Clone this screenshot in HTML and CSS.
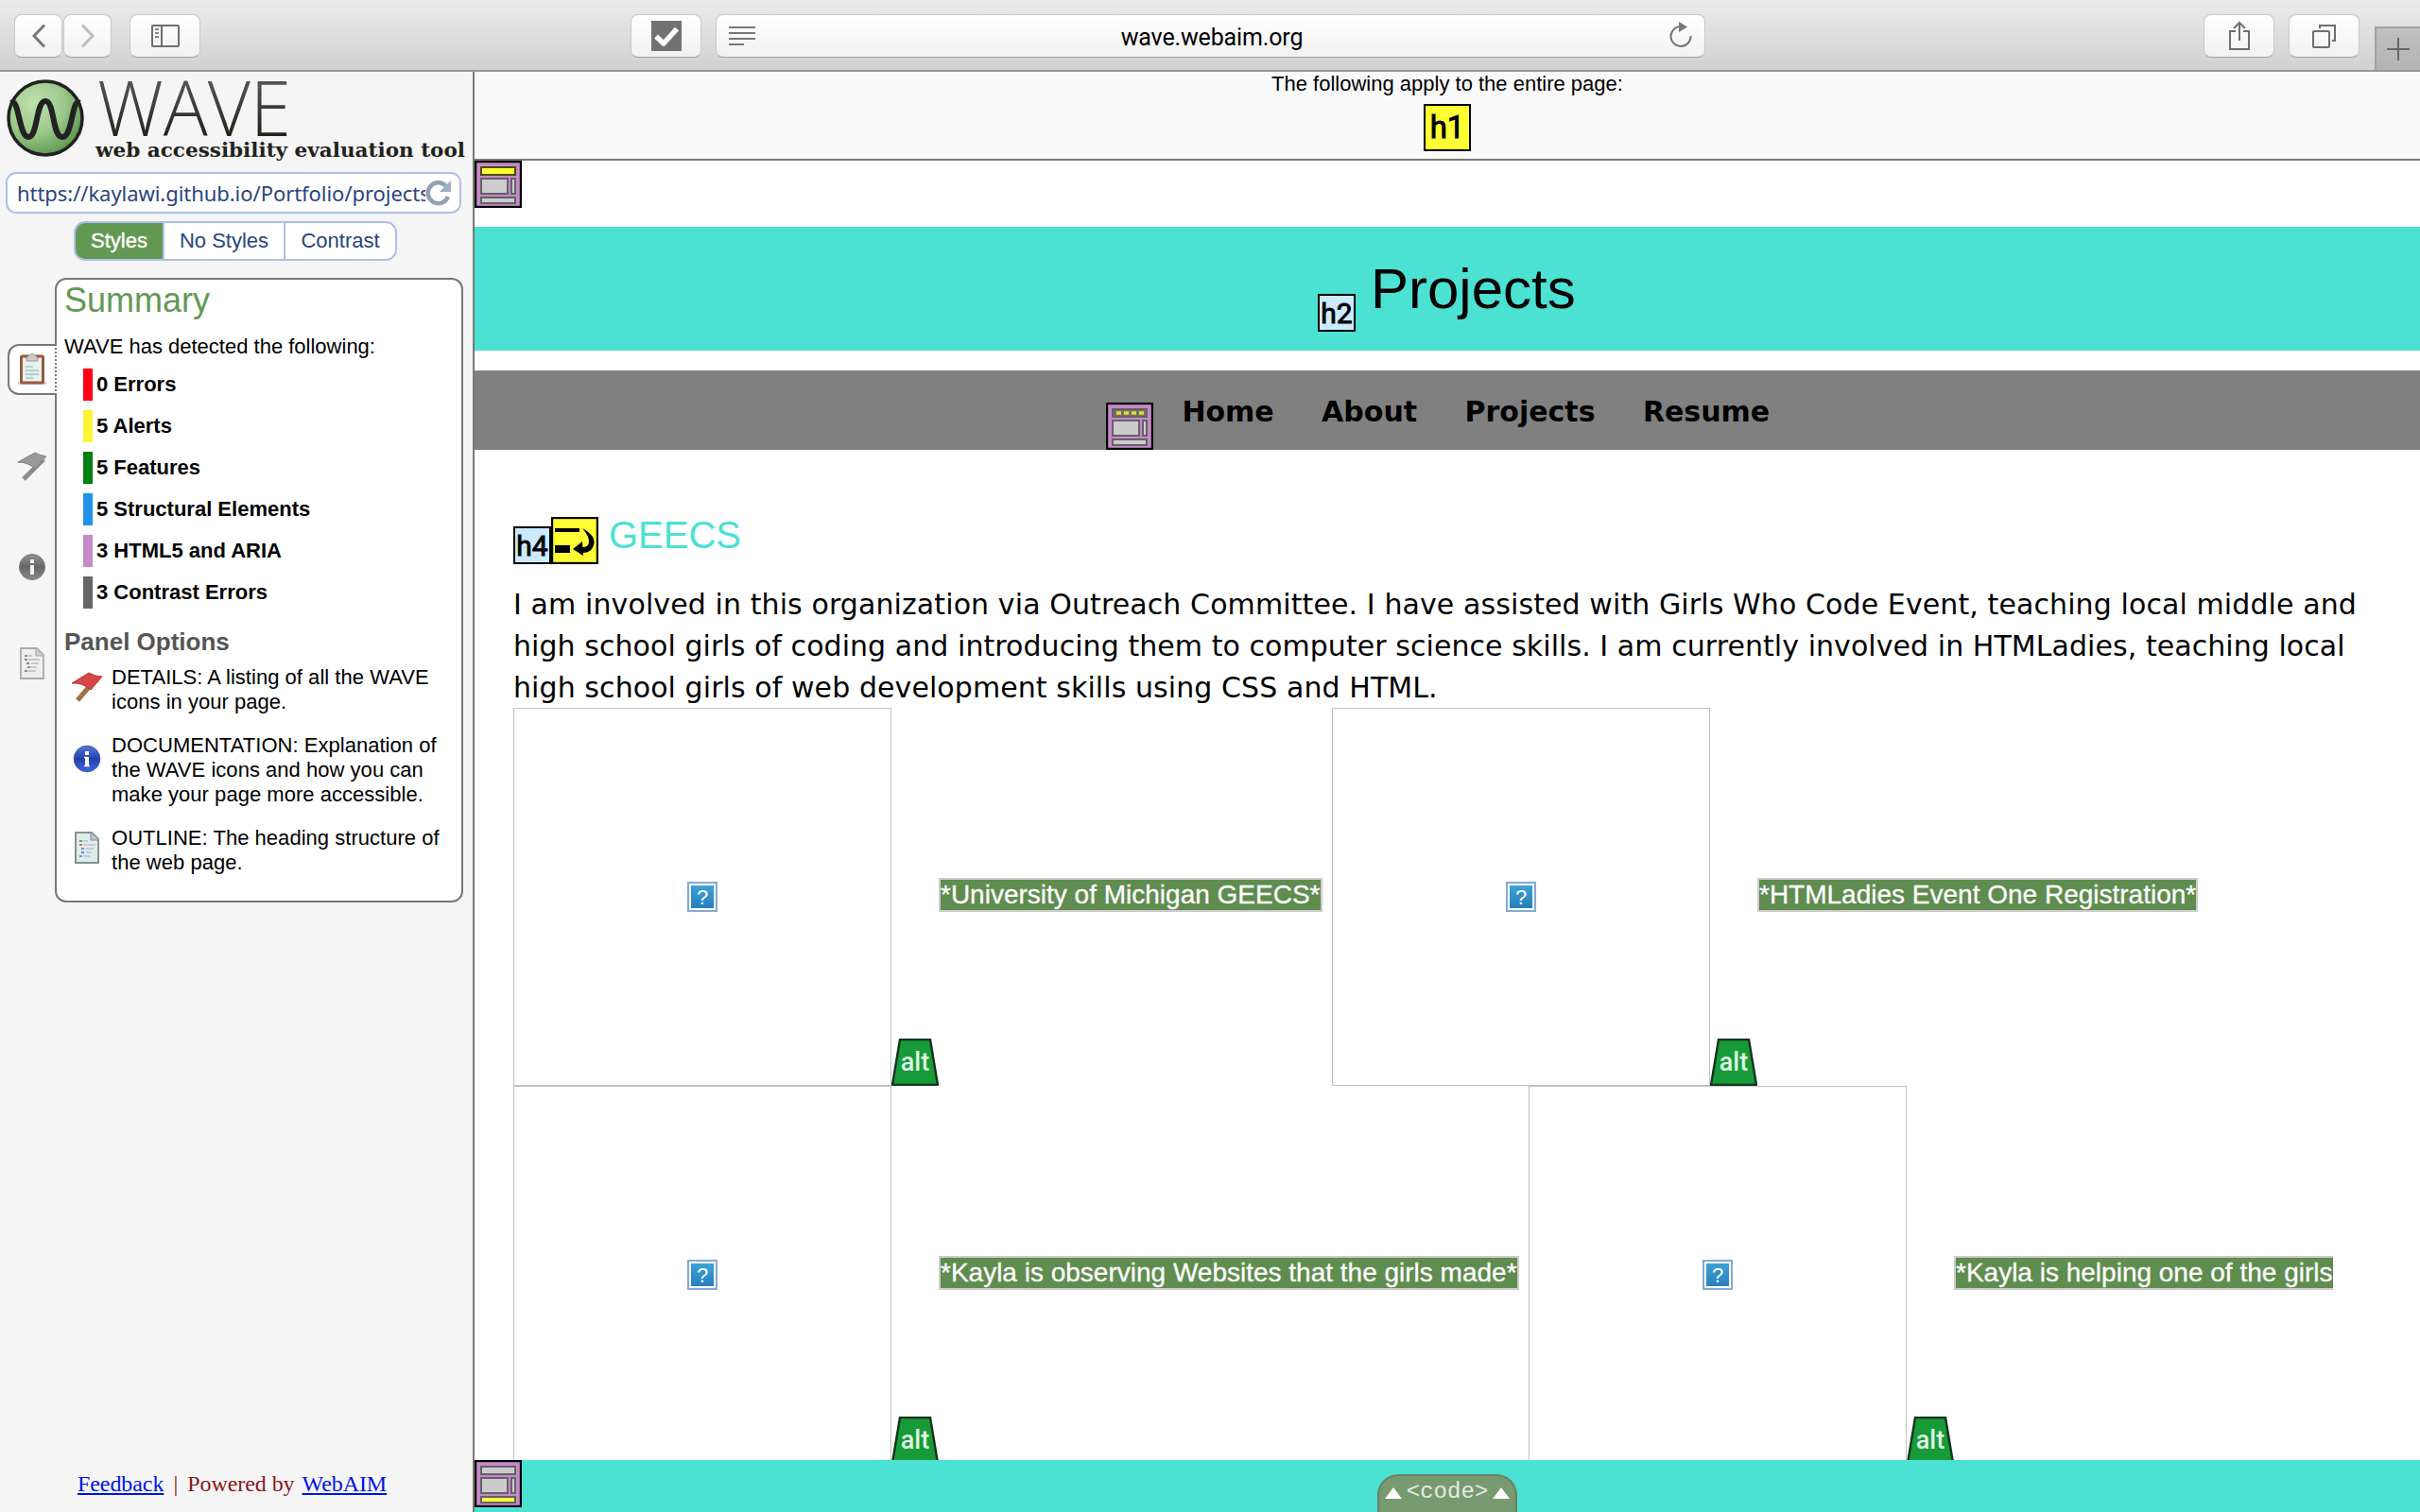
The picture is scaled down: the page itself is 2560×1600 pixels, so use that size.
FILE: index.html
```html
<!DOCTYPE html>
<html lang="en">
<head>
<meta charset="utf-8">
<title>WAVE Report</title>
<link rel="stylesheet" href="styles.css">
</head>
<body>
<svg class="defs" width="0" height="0" aria-hidden="true">
  <defs>
    <linearGradient id="ink" x1="0" y1="0" x2="0" y2="1"><stop offset="0.25" stop-color="#555"/><stop offset="0.8" stop-color="#22221a"/></linearGradient>
    <radialGradient id="orb" cx="0.35" cy="0.3" r="0.75"><stop offset="0" stop-color="#bfe0ae"/><stop offset="0.55" stop-color="#9cc88a"/><stop offset="1" stop-color="#5b964b"/></radialGradient>
    <linearGradient id="blue" x1="0" y1="0" x2="0" y2="1"><stop offset="0" stop-color="#5a78d8"/><stop offset="0.5" stop-color="#2440ae"/><stop offset="1" stop-color="#3f66dc"/></linearGradient>
    <linearGradient id="grey" x1="0" y1="0" x2="0" y2="1"><stop offset="0" stop-color="#949494"/><stop offset="0.5" stop-color="#666"/><stop offset="1" stop-color="#8b8b8b"/></linearGradient>
    <linearGradient id="sky" x1="0" y1="0" x2="0" y2="1"><stop offset="0" stop-color="#3aa3d6"/><stop offset="1" stop-color="#277fbe"/></linearGradient>
    <symbol id="alt" viewBox="0 0 50 50"><path d="M9 1H41L49 49H1Z" fill="#169b38" stroke="#15331c" stroke-width="2.4"/><text x="25" y="34" text-anchor="middle" class="alt-text">alt</text></symbol>
    <symbol id="missing" viewBox="0 0 32 32"><rect width="32" height="32" fill="#86a9d6"/><rect x="2" y="2" width="28" height="28" fill="#fff"/><rect x="4" y="4" width="24" height="24" fill="url(#sky)"/><text x="16" y="24" text-anchor="middle" class="missing-text">?</text></symbol>
    <symbol id="layout" viewBox="0 0 50 50"><rect x="1" y="1" width="48" height="48" fill="#c58ac8" stroke="#000" stroke-width="2.4"/><g fill="#ccc" stroke="#65606a" stroke-width="2"><rect x="7" y="19" width="28" height="16"/><rect x="39" y="19" width="4" height="16"/></g></symbol>
  </defs>
</svg>

<header class="toolbar">
  <div class="btn nav-btn"><svg width="50" height="46" fill="none" stroke="#777" stroke-width="3"><path d="M31 11.500L20 23L31 34.500"/></svg></div>
  <div class="btn nav-btn fwd"><svg width="50" height="46" fill="none" stroke="#bdbdbd" stroke-width="3"><path d="M19 11.500L30 23L19 34.500"/></svg></div>
  <div class="btn side-btn"><svg width="30" height="24" fill="none" stroke="#6e6e6e" stroke-width="2"><rect x="1" y="1" width="28" height="22" rx="1"/><path d="M11 1V23"/><path d="M4 5H8M4 9H8M4 13H8" stroke-width="1.800" stroke="#888"/></svg></div>
  <div class="btn check-btn"><svg width="32" height="32"><rect width="32" height="32" fill="#727272"/><path d="M5 16.500L13 24L27 8.500" fill="none" stroke="#fff" stroke-width="5.500" stroke-linejoin="round" stroke-linecap="butt"/></svg></div>
  <div class="btn address">
    <svg width="28" height="20" stroke="#777" stroke-width="2"><path d="M0 1H28M0 7H28M0 13H28M0 19H16"/></svg>
    <span class="host">wave.webaim.org</span>
    <svg class="reload" width="26" height="28" fill="none" stroke="#777" stroke-width="2"><path d="M14 5A10.500 10.500 0 1 0 23.500 15"/><path d="M11 0L20 5.500L11 11Z" fill="#777" stroke="none"/></svg>
  </div>
  <div class="btn share"><svg width="24" height="32" fill="none" stroke="#6e6e6e" stroke-width="2"><path d="M8 11H2V30H22V11H16M12 21V3M6 8L12 2L18 8"/></svg></div>
  <div class="btn tabs-btn"><svg width="26" height="26" fill="none" stroke="#6e6e6e" stroke-width="2"><rect x="1" y="8" width="17" height="17" rx="1"/><path d="M8 5V2H24V18H21"/></svg></div>
  <div class="plus"><svg width="24" height="24" stroke="#666" stroke-width="2"><path d="M0 12H24M12 0V24"/></svg></div>
</header>

<div class="main">
  <aside class="sidebar">
    <svg class="logo" width="500" height="106">
      <circle cx="48" cy="49" r="39" fill="url(#orb)" stroke="#222" stroke-width="3.500"/>
      <path d="M12 33C20 27 20 69 30 69S38 31 48 31S55 69 66 69S76 27 84 33" fill="none" stroke="#222" stroke-width="6"/>
      <text x="103" y="68" class="wave" textLength="205" lengthAdjust="spacingAndGlyphs" fill="url(#ink)">WAVE</text>
      <text x="101" y="90" class="slogan" textLength="391" lengthAdjust="spacingAndGlyphs">web accessibility evaluation tool</text>
    </svg>
    <div class="url"><span>https://kaylawi.github.io/Portfolio/projects.html</span>
      <svg width="28" height="28" fill="none"><path d="M21.500 6.500A11 11 0 1 0 24 18" stroke="#93a0b4" stroke-width="4.500"/><path d="M27 1V13H15Z" fill="#a0afbf"/></svg>
    </div>
    <div class="modes"><span class="on">Styles</span><span>No Styles</span><span>Contrast</span></div>
    <div class="lower">
      <nav class="side-tabs">
        <div class="side-tab active"><svg width="30" height="34"><path d="M0 30H30V33H0Z" fill="#777" opacity=".35"/><rect x="3.500" y="3" width="23" height="28" rx="1" fill="#e7f1ef" stroke="#99593a" stroke-width="3"/><path d="M9 5Q15 -4 21 5V8H9Z" fill="#ccc" stroke="#999"/><path d="M8 14H16M8 18H22M8 22H22M8 26H16" stroke="#b5cfcb" stroke-width="2"/></svg></div>
        <div class="side-tab t2"><svg width="32" height="32"><path d="M28 8L7 29" stroke="#8b8b8b" stroke-width="5"/><path d="M1 11L19 1Q24 4 31 5L19 18Q12 11 1 11Z" fill="#9a9a9a" stroke="#7d7d7d"/></svg></div>
        <div class="side-tab t3"><svg width="30" height="30"><circle cx="15" cy="15" r="13.500" fill="url(#grey)" stroke="#777"/><path d="M15 7V11M15 13V23" stroke="#f4f4f4" stroke-width="4"/></svg></div>
        <div class="side-tab t4"><svg width="26" height="34"><path d="M1 1H18L25 8V33H1Z" fill="#eee" stroke="#aaa" stroke-width="1.800"/><path d="M17 1V9H25" fill="#ccc" stroke="#aaa"/><path d="M9 9H13M9 13H21M12 17H20M12 21H18M9 25H17" stroke="#bbb" stroke-width="1.600"/><path d="M5 9H8M5 13H8M7 17H10M8 21H11M5 25H8" stroke="#888" stroke-width="2"/></svg></div>
      </nav>
      <section class="panel">
        <h2>Summary</h2>
        <p class="lead">WAVE has detected the following:</p>
        <ul class="counts">
          <li class="c-err">0 Errors</li><li class="c-alert">5 Alerts</li><li class="c-feat">5 Features</li><li class="c-struct">5 Structural Elements</li><li class="c-html">3 HTML5 and ARIA</li><li class="c-con">3 Contrast Errors</li>
        </ul>
        <h3>Panel Options</h3>
        <div class="opt"><svg width="34" height="34"><path d="M26 9L7 31" stroke="#9b7448" stroke-width="5"/><path d="M1 13L19 2Q26 6 33 6L21 20Q12 12 1 13Z" fill="#d94648" stroke="#b33"/></svg><p>DETAILS: A listing of all the WAVE<br>icons in your page.</p></div>
        <div class="opt info"><svg width="34" height="34"><circle cx="17" cy="17" r="13.800" fill="url(#blue)" stroke="#3553b8"/><path d="M17 9V13M17 15V25" stroke="#fff" stroke-width="4"/><path d="M14 24.500H20M14 15.500H17" stroke="#fff" stroke-width="1.500"/></svg><p>DOCUMENTATION: Explanation of<br>the WAVE icons and how you can<br>make your page more accessible.</p></div>
        <div class="opt"><svg width="34" height="34"><path d="M5 1H22L29 8V33H5Z" fill="#e0ecea" stroke="#829492" stroke-width="2"/><path d="M21 1V9H29" fill="#b8cac7" stroke="#829492"/><path d="M13 10H18M13 14H26M16 18H24M16 22H22M13 26H21" stroke="#b5c3d6" stroke-width="1.600"/><path d="M9 10H12" stroke="#4b4" stroke-width="2"/><path d="M9 14H12" stroke="#e66" stroke-width="2"/><path d="M11 18H14M9 26H12" stroke="#59f" stroke-width="2"/><path d="M11 22H14" stroke="#879" stroke-width="2"/></svg><p>OUTLINE: The heading structure of<br>the web page.</p></div>
      </section>
    </div>
    <footer class="credits"><a>Feedback</a><i>|</i><span>Powered by</span><a>WebAIM</a></footer>
  </aside>

  <div class="page">
    <div class="global"><p>The following apply to the entire page:</p><span class="tag yellow big">h1</span></div>
    <div class="top-icon"><svg width="50" height="50"><use href="#layout"/><rect x="7" y="7" width="36" height="8" fill="#ff3" stroke="#4d4a10" stroke-width="2"/><rect x="7" y="39" width="36" height="6" fill="#ccc" stroke="#65606a" stroke-width="2"/></svg></div>
    <div class="banner"><span class="tag">h2</span><h1>Projects</h1></div>
    <nav class="menu">
      <svg width="50" height="50"><use href="#layout"/><rect x="7" y="7" width="36" height="8" fill="#7a7060" stroke="#65606a" stroke-width="2"/><path d="M11 11H40" stroke="#e6dc40" stroke-width="3.500" stroke-dasharray="5 3"/><rect x="7" y="39" width="36" height="6" fill="#ccc" stroke="#65606a" stroke-width="2"/></svg>
      <a>Home</a><a>About</a><a>Projects</a><a>Resume</a>
    </nav>
    <div class="content">
      <div class="title"><span class="tag">h4</span><svg width="50" height="50"><rect x="1" y="1" width="48" height="48" fill="#ff3" stroke="#000" stroke-width="2.400"/><path d="M4 12H30V16H4ZM4 30H20V38H4Z"/><path d="M33 12Q48 20 45 30Q42 39 32 38L33 32Q40 32 40 26Q40 20 33 12Z"/><path d="M23 34L33 26L34 41Z"/></svg><h4>GEECS</h4></div>
      <p class="copy"><span class="l1">I am involved in this organization via Outreach Committee. I have assisted with Girls Who Code Event, teaching local middle and</span><span class="l2">high school girls of coding and introducing them to computer science skills. I am currently involved in HTMLadies, teaching local</span><span class="l3">high school girls of web development skills using CSS and HTML.</span></p>
      <div class="shots">
        <div class="shot"><svg width="32" height="32"><use href="#missing"/></svg></div><svg class="alt" width="50" height="50"><use href="#alt"/></svg><span class="label w1">*University of Michigan GEECS*</span>
        <div class="shot"><svg width="32" height="32"><use href="#missing"/></svg></div><svg class="alt" width="50" height="50"><use href="#alt"/></svg><span class="label w2">*HTMLadies Event One Registration*</span>
      </div>
      <div class="shots">
        <div class="shot"><svg width="32" height="32"><use href="#missing"/></svg></div><svg class="alt" width="50" height="50"><use href="#alt"/></svg><span class="label w3">*Kayla is observing Websites that the girls made*</span>
        <div class="shot"><svg width="32" height="32"><use href="#missing"/></svg></div><svg class="alt" width="50" height="50"><use href="#alt"/></svg><span class="label w4">*Kayla is helping one of the girls</span>
      </div>
    </div>
    <div class="foot">
      <svg width="50" height="50"><use href="#layout"/><rect x="7" y="7" width="36" height="8" fill="#ccc" stroke="#65606a" stroke-width="2"/><rect x="7" y="39" width="36" height="6" fill="#ff3" stroke="#65606a" stroke-width="2"/></svg>
      <div class="code"><svg width="18" height="12"><path d="M9 0L18 12H0Z" fill="#fff"/></svg><span>&lt;code&gt;</span><svg width="18" height="12"><path d="M9 0L18 12H0Z" fill="#fff"/></svg></div>
    </div>
  </div>
</div>
</body>
</html>
```
FILE: styles.css
```css
* { box-sizing: border-box; margin: 0; padding: 0; }
body { width: 2560px; height: 1600px; overflow: hidden; font-family: "Liberation Sans", Arial, sans-serif; font-size: 22px; color: #000; background: #fff; }
svg { display: block; flex: none; }
.defs { position: absolute; }

.toolbar { height: 76px; display: flex; align-items: flex-start; padding: 15px 0 0 15px; background: linear-gradient(#ebebeb, #d1d1d1); border-bottom: 2px solid #999; }
.btn { height: 46px; border: 1px solid #c9c9c9; border-bottom-color: #a5a5a5; border-radius: 8px; background: linear-gradient(#fff, #f1f1f1); display: flex; align-items: center; justify-content: center; flex: none; }
.nav-btn { width: 51px; }
.fwd { margin-left: 1px; }
.side-btn { width: 75px; margin-left: 19px; }
.check-btn { width: 75px; margin-left: 455px; }
.address { width: 1047px; margin-left: 15px; padding: 0 12px 0 13px; justify-content: space-between; }
.host { font-family: Roboto, "Liberation Sans", sans-serif; font-size: 25px; letter-spacing: -0.15px; padding-top: 2px; }
.reload { margin-top: -2px; }
.share { width: 75px; margin-left: 527px; }
.tabs-btn { width: 75px; margin-left: 15px; }
.plus { width: 48px; height: 46px; margin: 13px 0 0 16px; background: linear-gradient(#c0c0c0, #b2b2b2); border: solid #a1a1a1; border-width: 2px 0 0 2px; display: flex; align-items: center; justify-content: center; }

.main { display: flex; height: 1524px; }
.sidebar { width: 502px; border-right: 2px solid #747c70; background: #f5f5f5; display: flex; flex-direction: column; }
.logo { overflow: visible; }
.wave { font-family: "Open Sans", sans-serif; font-weight: 300; font-size: 82px; }
.slogan { font-family: "DejaVu Serif", serif; font-weight: 700; font-size: 21px; fill: #22221a; }
.url { width: 482px; height: 44px; margin-left: 6px; border: 2px solid #aec0ea; border-radius: 11px; background: #fff; display: flex; align-items: center; padding-left: 10px; font-family: "Noto Sans", sans-serif; font-size: 22px; letter-spacing: -0.05px; color: #2a4480; }
.url span { width: 432px; overflow: hidden; white-space: nowrap; }
.modes { display: flex; width: 342px; height: 42px; margin: 8px 0 0 78px; border: 2px solid #aec0ea; border-radius: 12px; overflow: hidden; background: #fff; line-height: 38px; text-align: center; color: #2a4480; }
.modes span { flex: 1 1 116px; }
.modes .on { flex: 0 0 94px; margin: -2px 0 -2px -2px; background: #639853; border: 2px solid #7289ba; border-right: 0; border-radius: 12px 0 0 12px; color: #fff; -webkit-text-stroke: 0.4px #fff; }
.modes span:nth-child(2) { flex: 0 0 130px; border: solid #aec0ea; border-width: 0 2px; }
.lower { display: flex; margin-top: 18px; }
.side-tabs { width: 58px; padding: 70px 0 0 8px; z-index: 1; }
.side-tab { width: 52px; display: flex; justify-content: center; }
.active { height: 54px; align-items: center; border: 2px solid #747c70; border-right: 2px dotted #747c70; border-radius: 12px 0 0 12px; background: #fff; }
.t2 { margin-top: 60px; }
.t3 { margin-top: 75px; }
.t4 { margin-top: 70px; }
.panel { width: 432px; height: 661px; border: 2px solid #747c70; border-radius: 12px; background: #fff; padding-left: 8px; }
.panel h2 { font-weight: 400; font-size: 36px; line-height: 42px; color: #639853; padding-top: 1px; }
.lead { line-height: 26px; margin-top: 15px; }
.counts { list-style: none; margin: 10px 0 0 20px; display: flex; flex-direction: column; gap: 10px; font-weight: 700; line-height: 34px; }
.counts li { height: 34px; padding-left: 4px; border-left: 10px solid; color: #000; }
.counts .c-err { border-color: #ff0018; }
.counts .c-alert { border-color: #fff333; }
.counts .c-feat { border-color: #008013; }
.counts .c-struct { border-color: #2492eb; }
.counts .c-html { border-color: #c58ac8; }
.counts .c-con { border-color: #666; }
.panel h3 { font-size: 26px; line-height: 30px; color: #555; margin: 20px 0 10px; }
.opt { display: flex; gap: 9px; padding-left: 7px; margin-bottom: 20px; line-height: 26px; white-space: nowrap; }
.opt svg { margin-top: 6px; }
.opt.info svg { margin-top: 10px; }
.opt p { letter-spacing: 0.03px; }
.credits { display: flex; margin: auto 0 16px 82px; font-family: "Liberation Serif", serif; font-size: 24px; letter-spacing: -0.08px; line-height: 28px; color: #8a1520; white-space: nowrap; }
.credits a { color: #0013e6; text-decoration: underline; }
.credits i { width: 25px; text-align: center; font-style: normal; }
.credits span { margin-right: 8px; }

.page { flex: 1; display: flex; flex-direction: column; height: 1524px; min-width: 0; }
.global { height: 94px; flex: none; background: #f9f9f9; border-bottom: 2px solid #747c70; display: flex; flex-direction: column; align-items: center; }
.global p { line-height: 26px; margin: 0 0 8px; }
.tag { display: block; width: 40px; height: 40px; flex: none; border: 2px solid #000; background: #cbeaff; font: 400 30px/38px Roboto, sans-serif; text-align: center; -webkit-text-stroke: 0.9px #000; }
.tag.big { width: 50px; height: 50px; line-height: 46px; font-size: 33px; }
.yellow { background: #ff3; }
.top-icon { height: 70px; flex: none; }
.banner { height: 131px; flex: none; background: #4be1d3; display: flex; padding-left: 892px; }
.banner .tag { margin-top: 71px; }
.banner h1 { font-weight: 400; font-size: 60px; line-height: 68px; margin: 32px 0 0 16px; }
.menu { height: 84px; flex: none; margin-top: 21px; background: #808080; display: flex; padding-left: 668px; gap: 50.400px; font-family: Verdana, "DejaVu Sans", sans-serif; font-weight: 700; font-size: 30px; line-height: 36px; }
.menu svg { margin: 34px -20px 0 0; }
.menu a { margin-top: 26px; }
.content { height: 1069px; flex: none; overflow: hidden; padding: 71px 0 0 41px; }
.title { display: flex; align-items: flex-end; height: 50px; }
.title h4 { font-weight: 400; font-size: 40px; line-height: 46px; color: #4be1d3; margin: 0 0 8px 11px; }
.copy { height: 131px; margin-top: 21px; font-family: "DejaVu Sans", sans-serif; font-size: 30px; line-height: 44px; }
.copy span { display: block; white-space: nowrap; }
.copy .l1 { letter-spacing: 0.1px; }
.copy .l2 { letter-spacing: 0.06px; }
.copy .l3 { letter-spacing: 0.08px; }
.shots { height: 400px; display: flex; white-space: nowrap; }
.shot { width: 400px; height: 400px; flex: none; border: 1px solid #c0c0c0; display: flex; align-items: center; justify-content: center; }
.alt { align-self: flex-end; }
.alt-text { font: 500 27px Roboto, sans-serif; fill: #dff5e3; }
.missing-text { font: 22px "Liberation Sans", sans-serif; fill: #fff; }
.label { height: 36px; margin: 180px 10px 0 0; border: 2px solid #ccc; background: #5f8c4f; color: #fff; font-size: 28px; line-height: 31px; flex: none; -webkit-text-stroke: 0.3px #fff; }
.w1 { width: 406px; }
.w2 { width: 466px; }
.w3 { width: 614px; }
.w4 { width: 401px; border-right: 0; }
.foot { height: 55px; flex: none; background: #4be1d3; display: flex; }
.code { width: 148px; margin: 15px 0 0 905px; border: 2px solid #6d7f6a; border-bottom: 0; border-radius: 22px 22px 0 0; background: #779a70; display: flex; align-items: flex-start; justify-content: center; gap: 5px; color: #e4ece2; font: 24px/28px "Liberation Mono", monospace; padding-top: 3px; }
.code svg { margin-top: 9px; }
```
